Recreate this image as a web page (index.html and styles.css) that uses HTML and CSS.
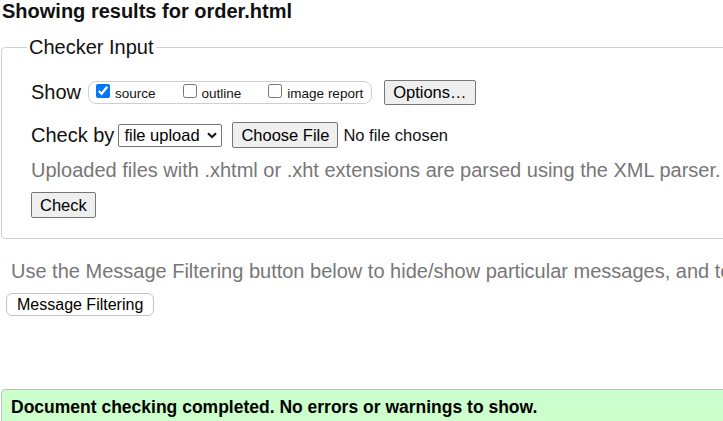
FILE: index.html
```html
<!DOCTYPE html>
<html lang="en">
<head>
<meta charset="utf-8">
<title>Showing results for order.html</title>
<link rel="stylesheet" href="styles.css">
</head>
<body>
<div class="page">
  <h2 class="title">Showing results for order.html</h2>
  <fieldset class="checker">
    <legend class="legend">Checker Input</legend>
    <div class="row row-show">
      <span class="label">Show</span>
      <span class="pill">
        <label class="opt"><input class="cb" type="checkbox" checked><span>source</span></label>
        <label class="opt"><input class="cb" type="checkbox"><span>outline</span></label>
        <label class="opt"><input class="cb" type="checkbox"><span>image report</span></label>
      </span>
      <button class="btn btn-options" type="button">Options…</button>
    </div>
    <div class="row row-check">
      <span class="label">Check by</span>
      <span class="select-wrap">
        <select class="select"><option>file upload</option></select>
        <svg class="chev" width="10" height="7" viewBox="0 0 10 7"><polyline points="1,1.2 5,5.2 9,1.2" fill="none" stroke="#111" stroke-width="2"/></svg>
      </span>
      <button class="btn btn-file" type="button">Choose File</button>
      <span class="nofile">No file chosen</span>
    </div>
    <p class="hint">Uploaded files with .xhtml or .xht extensions are parsed using the XML parser.</p>
    <div class="row row-submit">
      <button class="btn" type="submit">Check</button>
    </div>
  </fieldset>
  <p class="filter-note">Use the Message Filtering button below to hide/show particular messages, and to see total counts of errors and warnings.</p>
  <button class="filter-btn" type="button">Message Filtering</button>
  <div class="success">
    <p class="success-text">Document checking completed. No errors or warnings to show.</p>
  </div>
</div>
</body>
</html>
```

FILE: styles.css
```css
html, body {
  margin: 0;
  padding: 0;
  overflow: hidden;
  background: #fff;
}

body {
  font-family: "Liberation Sans", Arial, sans-serif;
  color: #000;
}

.page {
  width: 1000px;
}

.title {
  margin: 0;
  padding-left: 2px;
  font-size: 20px;
  line-height: 23px;
  font-weight: bold;
  color: #111;
}

.checker {
  margin: 13px 0 0 1px;
  padding: 0 20px 20px 29px;
  border: 1px solid #cfcfcf;
  border-radius: 4px;
  min-width: 0;
}

.legend {
  margin-left: -4px;
  padding: 0 2px;
  font-size: 20px;
  line-height: 23px;
  color: #111;
}

.row {
  display: flex;
  align-items: center;
}

.row-show {
  margin-top: 21px;
}

.row-check {
  margin-top: 17px;
}

.row-submit {
  margin-top: 10px;
}

.label {
  font-size: 20px;
  line-height: 23px;
  color: #111;
}

.pill {
  display: flex;
  align-items: center;
  box-sizing: border-box;
  height: 23px;
  margin-left: 7px;
  padding: 0 8px 0 7px;
  border: 1px solid #cfcfcf;
  border-radius: 8px;
}

.opt {
  display: inline-flex;
  align-items: baseline;
  font-size: 13.5px;
  line-height: 17px;
  color: #111;
}

.opt + .opt {
  margin-left: 27px;
}

.cb {
  width: 14px;
  height: 14px;
  margin: 0 5px 1px 0;
}

.btn {
  box-sizing: border-box;
  height: 26px;
  margin: 0;
  padding: 2px 8px;
  font-family: "Liberation Sans", Arial, sans-serif;
  font-size: 16.5px;
  line-height: 20px;
  color: #000;
  background: #efefef;
  border: 1px solid #767676;
  border-radius: 2px;
}

.btn-options {
  height: 25px;
  padding: 1px 8px 2px;
  margin-left: 12px;
}

.select-wrap {
  position: relative;
  display: inline-block;
  margin-left: 4px;
}

.select {
  -webkit-appearance: none;
  appearance: none;
  box-sizing: border-box;
  display: block;
  width: 104px;
  height: 23px;
  margin: 0;
  padding: 0 0 0 5px;
  font-family: "Liberation Sans", Arial, sans-serif;
  font-size: 16.5px;
  color: #000;
  background: #fff;
  border: 1px solid #767676;
  border-radius: 2px;
}

.chev {
  position: absolute;
  right: 5px;
  top: 8px;
  pointer-events: none;
}

.btn-file {
  margin-left: 10px;
}

.nofile {
  margin-left: 5px;
  font-size: 16.5px;
  line-height: 20px;
  color: #111;
}

.hint {
  margin: 11px 0 0;
  font-size: 20px;
  line-height: 23px;
  color: #777;
  white-space: nowrap;
}

.filter-note {
  margin: 21px 0 0;
  padding-left: 11px;
  font-size: 20px;
  line-height: 23px;
  color: #777;
  white-space: nowrap;
}

.filter-btn {
  display: block;
  box-sizing: border-box;
  height: 23px;
  margin: 10px 0 0 6px;
  padding: 1px 10px;
  font-family: "Liberation Sans", Arial, sans-serif;
  font-size: 16px;
  line-height: 19px;
  color: #000;
  background: #fff;
  border: 1px solid #c4c4c4;
  border-radius: 6px;
}

.success {
  margin: 73px 0 0 1px;
  padding: 7px 9px;
  background: #ccffcc;
  border: 1px solid #c0c0c0;
  border-radius: 4px;
}

.success-text {
  margin: 0;
  font-size: 17.5px;
  line-height: 20px;
  font-weight: bold;
  color: #000;
}
```
